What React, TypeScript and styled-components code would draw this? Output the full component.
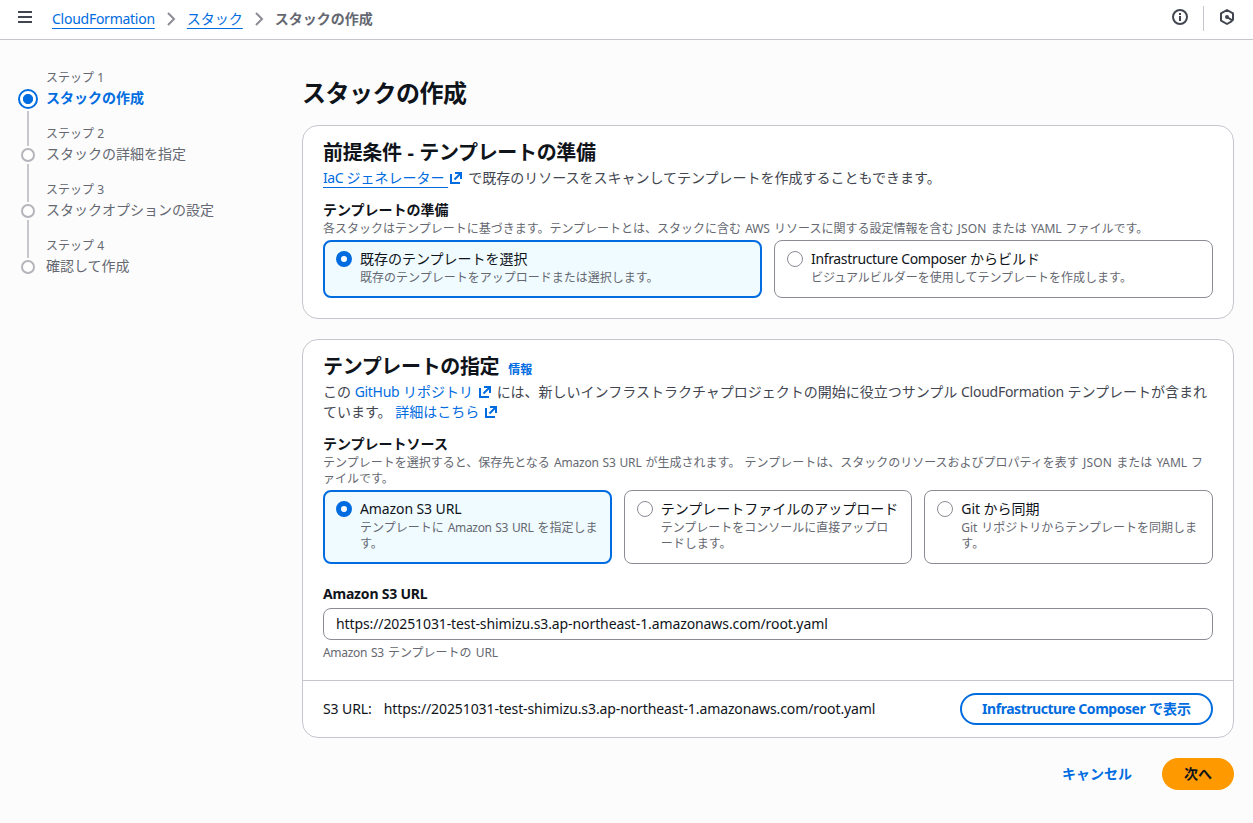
import React from 'react';
import styled, { createGlobalStyle, css } from 'styled-components';

const color = {
  text: '#0f141a',
  body: '#424650',
  muted: '#656871',
  link: '#006ce0',
  control: '#8c8c94',
  divider: '#c6c6cd',
  step: '#b4b4bb',
  page: '#fcfcfd',
  selected: '#f0fbff',
  primary: '#ff9900',
};

const GlobalStyle = createGlobalStyle`
  * { box-sizing: border-box; }
  body {
    margin: 0;
    background: ${color.page};
    color: ${color.text};
    font-family: 'Noto Sans', 'Noto Sans CJK JP', sans-serif;
    font-size: 14px;
    line-height: 20px;
  }
  h1, h2, h3, p, ol { margin: 0; padding: 0; }
  ol { list-style: none; }
`;

const Latin = styled.span<{ $track?: number }>`
  letter-spacing: ${({ $track = -0.1 }) => $track}px;
`;

const TopBar = styled.header`
  display: flex;
  align-items: center;
  height: 40px;
  padding: 0 18px 5px 17px;
  background: #fff;
  border-bottom: 1px solid ${color.divider};
`;

const Breadcrumbs = styled.nav`
  display: flex;
  align-items: center;
  gap: 8px;
  flex: 1;
  margin: 3px 0 0 19px;
`;

const CrumbLink = styled.a`
  color: ${color.link};
  text-decoration: underline;
  text-decoration-thickness: 1px;
  text-underline-offset: 4px;
`;

const CrumbCurrent = styled.span`
  color: ${color.muted};
  font-weight: 700;
`;

const Tools = styled.div`
  display: flex;
  align-items: center;
`;

const ToolDivider = styled.span`
  width: 1px;
  height: 25px;
  margin: 3px 15px 0 15px;
  background: ${color.divider};
`;

const Layout = styled.div`
  display: grid;
  grid-template-columns: 284px 1fr;
  padding: 29px 19px 0 18px;
`;

const StepItem = styled.li`
  display: grid;
  grid-template-columns: 20px 1fr;
  column-gap: 8px;
  height: 56px;
`;

const StepRail = styled.div<{ $active?: boolean }>`
  display: flex;
  flex-direction: column;
  align-items: center;
  height: 56px;
  margin-top: ${({ $active }) => ($active ? 20 : 23)}px;
`;

const StepDot = styled.span<{ $active?: boolean }>`
  flex: none;
  border-radius: 50%;
  ${({ $active }) =>
    $active
      ? css`
          width: 20px;
          height: 20px;
          border: 2px solid ${color.link};
          background: radial-gradient(circle, ${color.link} 4.7px, #fff 5.4px);
        `
      : css`
          width: 14px;
          height: 14px;
          border: 2px solid ${color.step};
          background: #fff;
        `}
`;

const StepLine = styled.span<{ $active?: boolean }>`
  flex: none;
  width: 2px;
  height: ${({ $active }) => ($active ? 35 : 38)}px;
  margin-top: 2px;
  background: ${color.divider};
`;

const StepNumber = styled.div`
  height: 16px;
  margin: 1px 0 2px;
  color: ${color.muted};
  font-size: 12px;
  line-height: 16px;
`;

const StepTitle = styled.div<{ $active?: boolean }>`
  color: ${({ $active }) => ($active ? color.link : color.muted)};
  font-weight: ${({ $active }) => ($active ? 700 : 400)};
`;

const PageTitle = styled.h1`
  margin: 9px 0 17px;
  font-size: 24px;
  line-height: 30px;
  letter-spacing: -0.48px;
`;

const Card = styled.section`
  margin-bottom: 20px;
  background: #fff;
  border: 1px solid ${color.divider};
  border-radius: 16px;
`;

const CardBody = styled.div`
  padding: 15px 20px 20px;
`;

const CardHeading = styled.h2`
  display: flex;
  align-items: baseline;
  gap: 9px;
  height: 24px;
  margin-bottom: 3px;
  font-size: 20px;
  line-height: 24px;
  letter-spacing: -0.35px;
  word-spacing: 1px;
`;

const InfoLink = styled.a`
  color: ${color.link};
  font-size: 12px;
  line-height: 16px;
  letter-spacing: 0;
`;

const Lead = styled.p`
  color: ${color.body};
`;

const TextLink = styled.a<{ $underlined?: boolean }>`
  color: ${color.link};
  text-decoration: ${({ $underlined }) => ($underlined ? 'underline' : 'none')};
  text-decoration-thickness: 1px;
  text-underline-offset: 4px;
`;

const LinkIcon = styled.svg`
  width: 12px;
  height: 12px;
  margin: 0 6px 0 2px;
  vertical-align: -1px;
  fill: none;
  stroke: ${color.link};
  stroke-width: 2;
`;

const FieldLabel = styled.h3<{ $gap: number }>`
  margin-top: ${({ $gap }) => $gap}px;
  font-size: 14px;
  line-height: 20px;
`;

const Hint = styled.p`
  margin: 1px 0 -1px;
  color: ${color.muted};
  font-size: 12px;
  line-height: 16px;
  word-spacing: 1px;
`;

const Tiles = styled.div<{ $columns: number }>`
  display: grid;
  grid-template-columns: repeat(${({ $columns }) => $columns}, 1fr);
  gap: 12px;
  margin-top: 4px;
`;

const TileBox = styled.label<{ $selected?: boolean }>`
  display: grid;
  grid-template-columns: 16px 1fr;
  column-gap: 8px;
  border-radius: 8px;
  ${({ $selected }) =>
    $selected
      ? css`
          padding: 7px 11px 11px;
          border: 2px solid ${color.link};
          background: ${color.selected};
        `
      : css`
          padding: 8px 12px 12px;
          border: 1px solid ${color.control};
          background: #fff;
        `}
`;

const TileText = styled.div`
  display: flow-root;
`;

const Radio = styled.span<{ $selected?: boolean }>`
  width: 16px;
  height: 16px;
  margin-top: 2px;
  border-radius: 50%;
  background: #fff;
  border: ${({ $selected }) => ($selected ? `5px solid ${color.link}` : `1px solid ${color.control}`)};
`;

const UrlInput = styled.input`
  display: block;
  width: 100%;
  height: 32px;
  margin: 4px 0 5px;
  padding: 0 12px 2px;
  color: ${color.text};
  background: #fff;
  border: 1px solid ${color.control};
  border-radius: 8px;
  outline: none;
  font: inherit;
  letter-spacing: -0.1px;
`;

const CardFooter = styled.div`
  display: flex;
  align-items: center;
  gap: 12px;
  padding: 12px 20px;
  border-top: 1px solid ${color.divider};
`;

const OutlineButton = styled.button`
  width: 253px;
  height: 32px;
  margin-left: auto;
  padding: 0;
  color: ${color.link};
  background: #fff;
  border: 2px solid ${color.link};
  border-radius: 16px;
  font: inherit;
  font-weight: 700;
`;

const Actions = styled.div`
  display: flex;
  align-items: center;
  justify-content: flex-end;
  gap: 30px;
`;

const PlainButton = styled.button`
  padding: 0;
  color: ${color.link};
  background: none;
  border: 0;
  font: inherit;
  font-weight: 700;
`;

const PrimaryButton = styled.button`
  width: 72px;
  height: 32px;
  padding: 0;
  color: ${color.text};
  background: ${color.primary};
  border: 0;
  border-radius: 16px;
  font: inherit;
  font-weight: 700;
`;

const MenuIcon = () => (
  <svg width="16" height="16" viewBox="0 0 16 16" fill="none" stroke="#424650" strokeWidth="2">
    <path d="M1 3h14M1 8h14M1 13h14" />
  </svg>
);

const ChevronIcon = () => (
  <svg width="16" height="16" viewBox="0 0 16 16" fill="none" stroke={color.control} strokeWidth="2">
    <path d="m5 2 6 6-6 6" />
  </svg>
);

const InfoIcon = () => (
  <svg width="16" height="16" viewBox="0 0 16 16" fill="none" stroke="#424650" strokeWidth="2">
    <circle cx="8" cy="8" r="7" />
    <path d="M8 7v5M8 4v2" />
  </svg>
);

const AssistantIcon = () => (
  <svg width="16" height="16" viewBox="0 0 16 16" fill="none" stroke="#424650" strokeWidth="2" strokeLinejoin="round">
    <path d="M13 12.2 8 15 2 11.6V4.4L8 1l6 3.4v7.2" />
    <path d="M8 8l6 3.8" />
    <circle cx="8" cy="8" r="1" />
  </svg>
);

const ExternalIcon = () => (
  <LinkIcon viewBox="0 0 12 12">
    <path d="M1 2v9h9" />
    <path d="M5 1h6v6" />
    <path d="m4.5 7.5 6-6" />
  </LinkIcon>
);

interface TileProps {
  title: React.ReactNode;
  detail: React.ReactNode;
  selected?: boolean;
}

const Tile = ({ title, detail, selected }: TileProps) => (
  <TileBox $selected={selected}>
    <Radio $selected={selected} />
    <TileText>
      <div>{title}</div>
      <Hint as="div">{detail}</Hint>
    </TileText>
  </TileBox>
);

const steps = ['スタックの作成', 'スタックの詳細を指定', 'スタックオプションの設定', '確認して作成'];
const url = 'https://20251031-test-shimizu.s3.ap-northeast-1.amazonaws.com/root.yaml';

export default function App() {
  return (
    <>
      <GlobalStyle />
      <TopBar>
        <MenuIcon />
        <Breadcrumbs>
          <CrumbLink><Latin $track={-0.26}>CloudFormation</Latin></CrumbLink>
          <ChevronIcon />
          <CrumbLink>スタック</CrumbLink>
          <ChevronIcon />
          <CrumbCurrent>スタックの作成</CrumbCurrent>
        </Breadcrumbs>
        <Tools>
          <InfoIcon />
          <ToolDivider />
          <AssistantIcon />
        </Tools>
      </TopBar>

      <Layout>
        <ol>
          {steps.map((title, i) => (
            <StepItem key={title}>
              <StepRail $active={i === 0}>
                <StepDot $active={i === 0} />
                {i < steps.length - 1 && <StepLine $active={i === 0} />}
              </StepRail>
              <div>
                <StepNumber>ステップ {i + 1}</StepNumber>
                <StepTitle $active={i === 0}>{title}</StepTitle>
              </div>
            </StepItem>
          ))}
        </ol>

        <main>
          <PageTitle>スタックの作成</PageTitle>

          <Card>
            <CardBody>
              <CardHeading>前提条件 - テンプレートの準備</CardHeading>
              <Lead>
                <TextLink $underlined><Latin $track={-0.4}>IaC </Latin>ジェネレーター </TextLink>
                <ExternalIcon />
                で既存のリソースをスキャンしてテンプレートを作成することもできます。
              </Lead>
              <FieldLabel $gap={12}>テンプレートの準備</FieldLabel>
              <Hint>
                各スタックはテンプレートに基づきます。テンプレートとは、スタックに含む <Latin>AWS</Latin> リソースに関する設定情報を含む{' '}
                <Latin $track={0.2}>JSON</Latin> または <Latin>YAML</Latin> ファイルです。
              </Hint>
              <Tiles $columns={2}>
                <Tile selected title="既存のテンプレートを選択" detail="既存のテンプレートをアップロードまたは選択します。" />
                <Tile
                  title={<><Latin $track={-0.34}>Infrastructure Composer</Latin> からビルド</>}
                  detail="ビジュアルビルダーを使用してテンプレートを作成します。"
                />
              </Tiles>
            </CardBody>
          </Card>

          <Card>
            <CardBody>
              <CardHeading>
                テンプレートの指定
                <InfoLink>情報</InfoLink>
              </CardHeading>
              <Lead>
                この{' '}
                <TextLink><Latin $track={-0.3}>GitHub</Latin> リポジトリ </TextLink>
                <ExternalIcon />
                には、新しいインフラストラクチャプロジェクトの開始に役立つサンプル <Latin $track={-0.26}>CloudFormation</Latin>{' '}
                テンプレートが含まれています。 <TextLink>詳細はこちら </TextLink>
                <ExternalIcon />
              </Lead>
              <FieldLabel $gap={12}>テンプレートソース</FieldLabel>
              <Hint>
                テンプレートを選択すると、保存先となる <Latin $track={-0.2}>Amazon S3 URL</Latin> が生成されます。 テンプレートは、スタックのリソースおよびプロパティを表す{' '}
                <Latin $track={0.2}>JSON</Latin> または <Latin>YAML</Latin> フ<wbr />ァイルです。
              </Hint>
              <Tiles $columns={3}>
                <Tile
                  selected
                  title={<Latin>Amazon S3 URL</Latin>}
                  detail={<>テンプレートに <Latin $track={-0.35}>Amazon S3 URL</Latin> を指定します。</>}
                />
                <Tile title="テンプレートファイルのアップロード" detail="テンプレートをコンソールに直接アップロードします。" />
                <Tile
                  title={<><Latin>Git</Latin> から同期</>}
                  detail={<><Latin>Git</Latin> リポジトリからテンプレートを同期します。</>}
                />
              </Tiles>
              <FieldLabel $gap={20}><Latin $track={-0.2}>Amazon S3 URL</Latin></FieldLabel>
              <UrlInput defaultValue={url} />
              <Hint><Latin $track={-0.3}>Amazon S3</Latin> テンプレートの <Latin>URL</Latin></Hint>
            </CardBody>
            <CardFooter>
              <Latin>S3 URL:</Latin>
              <Latin>{url}</Latin>
              <OutlineButton><Latin $track={-0.46}>Infrastructure Composer</Latin> で表示</OutlineButton>
            </CardFooter>
          </Card>

          <Actions>
            <PlainButton>キャンセル</PlainButton>
            <PrimaryButton>次へ</PrimaryButton>
          </Actions>
        </main>
      </Layout>
    </>
  );
}
